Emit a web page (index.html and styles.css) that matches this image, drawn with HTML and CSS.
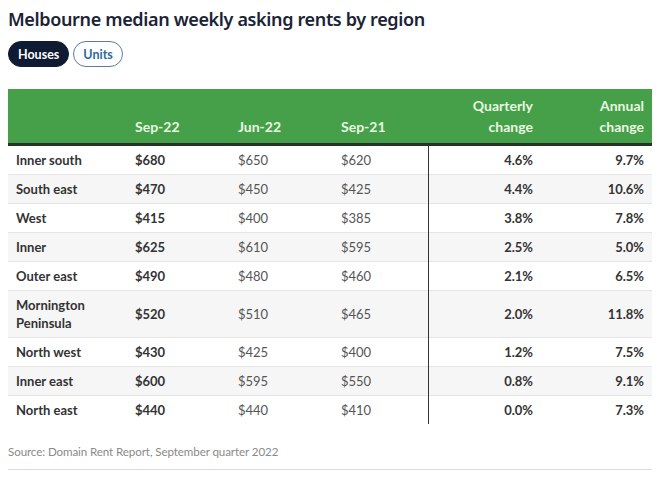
FILE: index.html
```html
<!DOCTYPE html>
<html lang="en">
<head>
<meta charset="utf-8">
<title>Melbourne median weekly asking rents by region</title>
<link rel="stylesheet" href="styles.css">
</head>
<body>
<div class="widget">
  <h1 class="title">Melbourne median weekly asking rents by region</h1>
  <div class="toggles">
    <button class="pill pill-active">Houses</button>
    <button class="pill">Units</button>
  </div>
  <table class="rents">
    <colgroup>
      <col class="c-region"><col class="c-num"><col class="c-num"><col class="c-num3"><col class="c-q"><col class="c-a">
    </colgroup>
    <thead>
      <tr>
        <th></th>
        <th>Sep-22</th>
        <th>Jun-22</th>
        <th>Sep-21</th>
        <th class="r">Quarterly<br>change</th>
        <th class="r">Annual<br>change</th>
      </tr>
    </thead>
    <tbody>
      <tr><td class="reg">Inner south</td><td class="cur">$680</td><td>$650</td><td>$620</td><td class="r q">4.6%</td><td class="r b">9.7%</td></tr>
      <tr><td class="reg">South east</td><td class="cur">$470</td><td>$450</td><td>$425</td><td class="r q">4.4%</td><td class="r b">10.6%</td></tr>
      <tr><td class="reg">West</td><td class="cur">$415</td><td>$400</td><td>$385</td><td class="r q">3.8%</td><td class="r b">7.8%</td></tr>
      <tr><td class="reg">Inner</td><td class="cur">$625</td><td>$610</td><td>$595</td><td class="r q">2.5%</td><td class="r b">5.0%</td></tr>
      <tr><td class="reg">Outer east</td><td class="cur">$490</td><td>$480</td><td>$460</td><td class="r q">2.1%</td><td class="r b">6.5%</td></tr>
      <tr><td class="reg">Mornington<br>Peninsula</td><td class="cur">$520</td><td>$510</td><td>$465</td><td class="r q">2.0%</td><td class="r b">11.8%</td></tr>
      <tr><td class="reg">North west</td><td class="cur">$430</td><td>$425</td><td>$400</td><td class="r q">1.2%</td><td class="r b">7.5%</td></tr>
      <tr><td class="reg">Inner east</td><td class="cur">$600</td><td>$595</td><td>$550</td><td class="r q">0.8%</td><td class="r b">9.1%</td></tr>
      <tr><td class="reg">North east</td><td class="cur">$440</td><td>$440</td><td>$410</td><td class="r q">0.0%</td><td class="r b">7.3%</td></tr>
    </tbody>
  </table>
  <p class="source">Source: Domain Rent Report, September quarter 2022</p>
  <hr class="rule">
</div>
</body>
</html>
```
FILE: styles.css
```css
body {
  margin: 8px;
  background: #ffffff;
  font-family: Lato, "Liberation Sans", sans-serif;
  color: #222;
}
.widget {
  width: 644px;
}
.title {
  margin: 0;
  font-family: "Noto Sans", "Liberation Sans", sans-serif;
  font-weight: 600;
  font-size: 18px;
  line-height: 22px;
  color: #1b2335;
  letter-spacing: -0.35px;
}
.toggles {
  display: flex;
  gap: 4px;
  margin-top: 11px;
}
.pill {
  font-family: Lato, "Liberation Sans", sans-serif;
  font-weight: 700;
  font-size: 12.5px;
  height: 26px;
  padding: 0 9px;
  border-radius: 13px;
  border: 1px solid #5b7d99;
  background: #fff;
  color: #2d6a9f;
  cursor: pointer;
}
.pill-active {
  background: #0f1a33;
  border-color: #0f1a33;
  color: #fff;
}
.rents {
  margin-top: 22px;
  width: 644px;
  border-collapse: collapse;
  table-layout: fixed;
  font-size: 13px;
}
.c-region { width: 119px; }
.c-num { width: 103px; }
.c-num3 { width: 95px; }
.c-q { width: 113px; }
.c-a { width: 111px; }
.rents thead th {
  background: #45a049;
  color: #e9f7e1;
  font-weight: 700;
  font-size: 14px;
  line-height: 21px;
  text-align: left;
  vertical-align: bottom;
  padding: 0 8px 6px;
  height: 55px;
  box-sizing: border-box;
  border-bottom: 3px solid #263326;
}
.rents th.r, .rents td.r { text-align: right; }
.rents tbody td {
  padding: 5px 8px;
  height: 29px;
  box-sizing: border-box;
  line-height: 18px;
  color: #555;
  border-top: 1px solid #e5e5e5;
  vertical-align: middle;
}
.rents tbody tr:first-child td { border-top: none; }
.rents tbody tr:nth-child(even) td { background: #f6f6f6; }
.rents td.reg, .rents td.cur, .rents td.b, .rents td.q {
  font-weight: 700;
  color: #333;
}
.rents td.q { border-left: 1px solid #333; }
.source {
  margin: 20px 0 0;
  font-size: 11.6px;
  line-height: 16px;
  letter-spacing: -0.1px;
  color: #8a8a8a;
}
.rule {
  margin: 9px 0 0;
  border: none;
  border-top: 1px solid #dcdcdc;
}
```
